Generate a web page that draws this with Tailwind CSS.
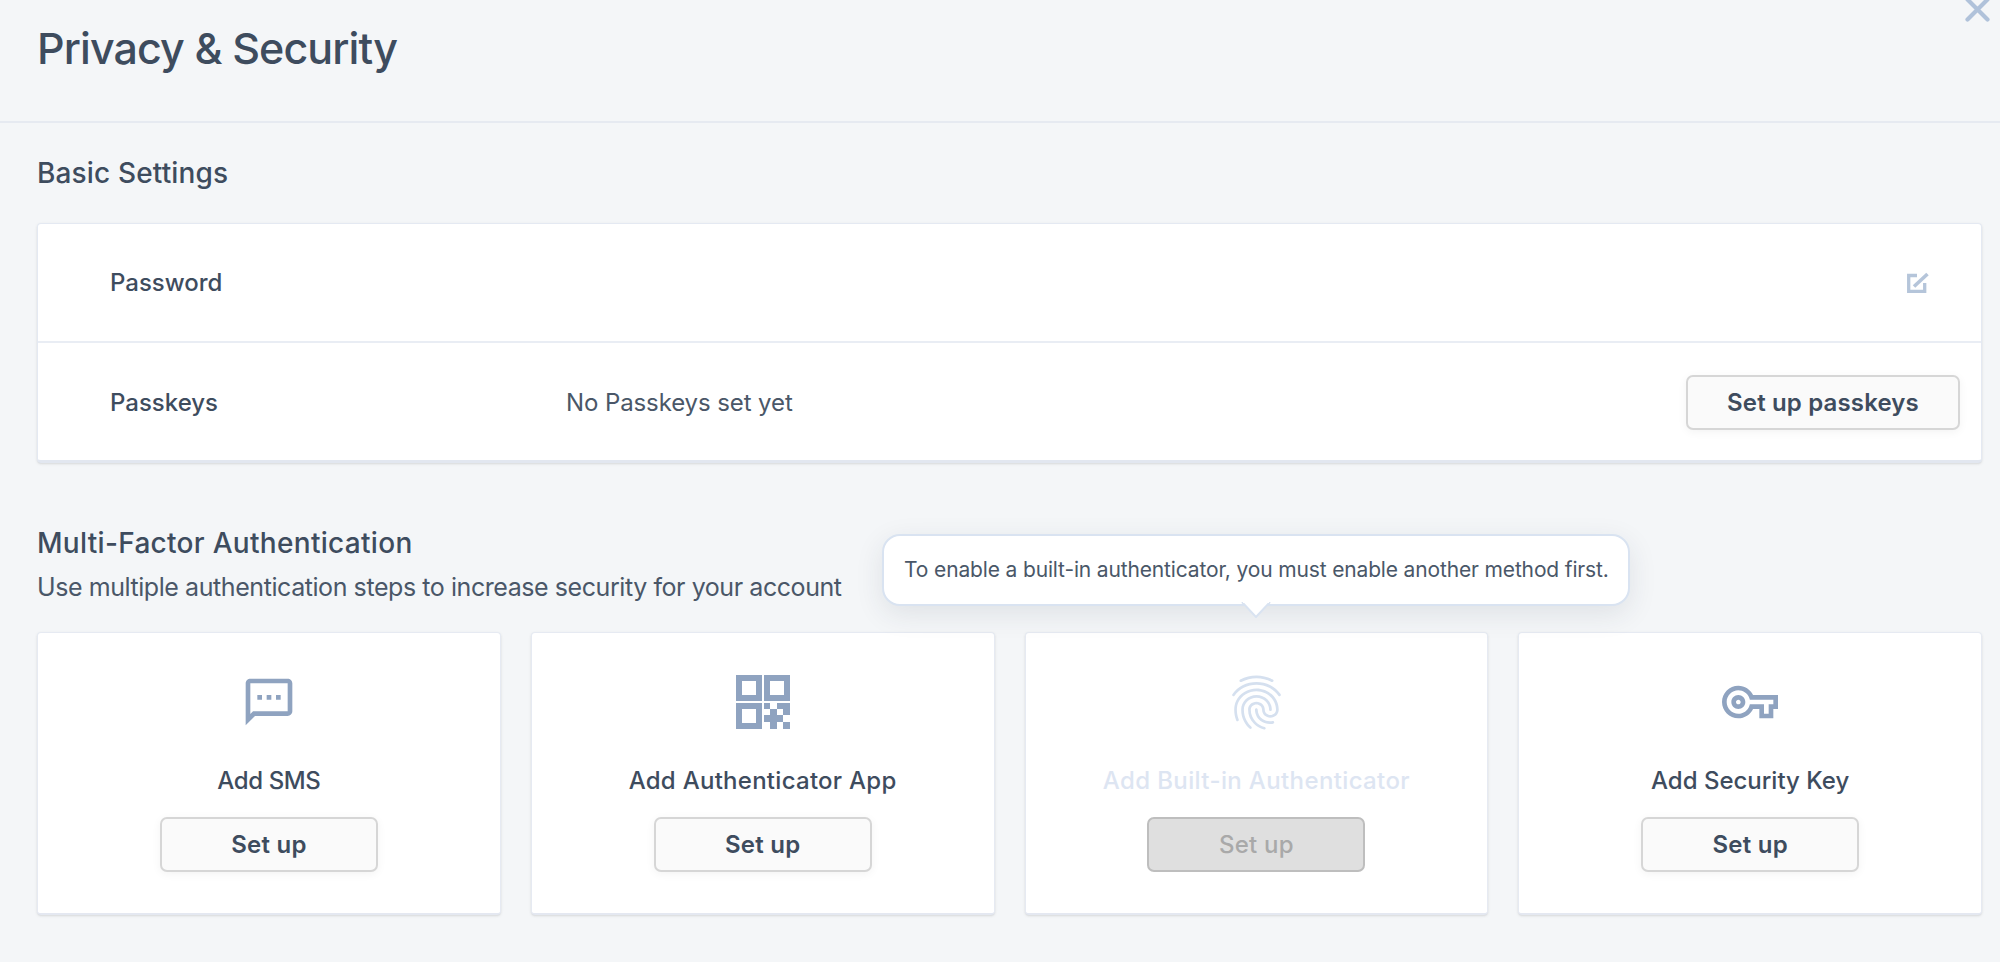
<!DOCTYPE html>
<html>
<head>
  <title>Privacy &amp; Security</title>
  <script src="https://cdn.jsdelivr.net/npm/@tailwindcss/browser@4"></script>
</head>
<body class="bg-[#f4f6f8] font-['Inter',sans-serif] text-[#3e4c5e] h-[962px] overflow-hidden relative">
  <!-- Close -->
  <svg class="absolute left-[1965px] top-[-3px] w-[25px] h-[25px]" viewBox="0 0 25 25" fill="none" stroke="#b0c2da" stroke-width="4.2" stroke-linecap="round"><path d="M2.5 2.5L22.5 22.5M22.5 2.5L2.5 22.5"/></svg>

  <!-- Header -->
  <div class="h-[123px] border-b-2 border-[#e6eaf1] pl-[37px] pt-[21px]">
    <h1 class="text-[43px] leading-[54px] font-medium tracking-[-0.9px]">Privacy &amp; Security</h1>
  </div>

  <div class="pl-[37px] pr-[18px]">
    <!-- Basic Settings -->
    <h2 class="mt-[32px] h-[36px] text-[28px] leading-[36px] font-medium tracking-[0.15px]">Basic Settings</h2>
    <div class="mt-[32px] bg-white rounded-[4px] border border-[#e4e9f2] border-b-[3px] border-b-[#e2e7f0] h-[240px] shadow-sm">
      <div class="h-[119px] border-b-2 border-[#e9edf4] flex items-center pl-[72px] pr-[52px] justify-between">
        <span class="text-[24px] font-medium">Password</span>
        <svg class="w-[22px] h-[21px]" viewBox="0 0 22 21" fill="none" stroke="#b5c5da"><path stroke-width="3.3" d="M10 3.5H1.7V19.3H17.7V11"/><path stroke-width="3.6" d="M7 14.5L20.5 2"/></svg>
      </div>
      <div class="h-[119px] flex items-center pl-[72px] pr-[21px]">
        <span class="w-[456px] text-[24px] font-medium">Passkeys</span>
        <span class="text-[24px] tracking-[-0.1px] text-[#4a5768]">No Passkeys set yet</span>
        <button class="ml-auto w-[274px] h-[55px] bg-[#fafafa] border-2 border-[#d6d6d6] rounded-[7px] text-[24px] font-semibold tracking-[0.15px] shadow-[0_2px_10px_rgba(0,0,0,0.05)]">Set up passkeys</button>
      </div>
    </div>

    <!-- Multi-Factor Authentication -->
    <h2 class="mt-[62px] h-[36px] text-[28px] leading-[36px] font-medium tracking-[0.3px]">Multi-Factor Authentication</h2>
    <p class="mt-[8px] h-[36px] text-[25px] leading-[36px] tracking-[-0.43px] text-[#4a5768]">Use multiple authentication steps to increase security for your account</p>

    <div class="mt-[27px] grid grid-cols-4 gap-[30px] h-[283px]">
      <!-- SMS -->
      <div class="bg-white rounded-[4px] border border-[#e6eaf2] border-b-2 border-b-[#e4e8f1] shadow-sm flex flex-col items-center pt-[37px]">
        <div class="h-[64px] flex items-center justify-center">
          <svg class="w-[56px] h-[56px]" viewBox="0 0 24 24" fill="#8fa3c0"><path d="M20 2H4c-1.1 0-1.99.9-1.99 2L2 22l4-4h14c1.1 0 2-.9 2-2V4c0-1.1-.9-2-2-2zm0 14H5.17L4 17.17V4h16v12zM7 9h2v2H7zm4 0h2v2h-2zm4 0h2v2h-2z"/></svg>
        </div>
        <div class="mt-[31px] h-[32px] text-[24px] leading-[32px] font-medium tracking-[-0.4px]">Add SMS</div>
        <button class="mt-[20px] w-[218px] h-[55px] bg-[#fafafa] border-2 border-[#d6d6d6] rounded-[7px] text-[24px] font-semibold tracking-[0.25px] shadow-[0_2px_10px_rgba(0,0,0,0.05)]">Set up</button>
      </div>

      <!-- Authenticator App -->
      <div class="bg-white rounded-[4px] border border-[#e6eaf2] border-b-2 border-b-[#e4e8f1] shadow-sm flex flex-col items-center pt-[37px]">
        <div class="h-[64px] flex items-center justify-center">
          <svg class="w-[54px] h-[54px]" viewBox="0 0 54 54" fill="#8fa3c0">
            <path fill-rule="evenodd" d="M0 0H26V26H0ZM6 6V20H20V6ZM28 0H54V26H28ZM34 6V20H48V6ZM0 28H26V54H0ZM6 34V48H20V34Z"/>
            <path d="M28 28h6v6h-6zM41 28h13v6H41zM34 34h7v6h-7zM47 34h7v6h-7zM28 40h19v7H28zM34 47h7v7h-7zM47 47h7v7h-7z"/>
          </svg>
        </div>
        <div class="mt-[31px] h-[32px] text-[24px] leading-[32px] font-medium tracking-[0.27px]">Add Authenticator App</div>
        <button class="mt-[20px] w-[218px] h-[55px] bg-[#fafafa] border-2 border-[#d6d6d6] rounded-[7px] text-[24px] font-semibold tracking-[0.25px] shadow-[0_2px_10px_rgba(0,0,0,0.05)]">Set up</button>
      </div>

      <!-- Built-in Authenticator (disabled, tooltip open) -->
      <div class="relative bg-white rounded-[4px] border border-[#e6eaf2] border-b-2 border-b-[#e4e8f1] shadow-sm flex flex-col items-center pt-[37px]">
        <div class="absolute left-1/2 -translate-x-1/2 bottom-[calc(100%+27px)] w-[748px] h-[72px] bg-white border-2 border-[#d9e3f1] rounded-[18px] flex items-center justify-center text-[21px] tracking-[-0.15px] text-[#4a5768] whitespace-nowrap shadow-[0_8px_28px_rgba(40,50,70,0.10)]">
          To enable a built-in authenticator, you must enable another method first.
          <svg class="absolute left-1/2 -translate-x-1/2 top-full -mt-[2px] w-[30px] h-[16px]" viewBox="0 0 30 16"><path d="M1 0L15 15L29 0" fill="#fff" stroke="#d9e3f1" stroke-width="2"/><path d="M2 0H28V1H2Z" fill="#fff"/></svg>
        </div>
        <div class="h-[64px] flex items-center justify-center">
          <svg class="w-[65px] h-[65px]" viewBox="0 0 24 24" fill="#d5e0ef"><path d="M17.81 4.47c-.08 0-.16-.02-.23-.06C15.66 3.42 14 3 12.01 3c-1.98 0-3.86.47-5.57 1.41-.24.13-.54.04-.68-.2-.13-.24-.04-.55.2-.68C7.82 2.52 9.86 2 12.01 2c2.13 0 3.99.47 6.03 1.52.25.13.34.43.21.67-.09.18-.26.28-.44.28zM3.5 9.72c-.1 0-.2-.03-.29-.09-.23-.16-.28-.47-.12-.7.99-1.4 2.25-2.5 3.75-3.27C9.98 4.04 14 4.03 17.15 5.65c1.5.77 2.76 1.86 3.75 3.25.16.22.11.54-.12.7-.23.16-.54.11-.7-.12-.9-1.26-2.04-2.25-3.39-2.94-2.87-1.47-6.54-1.47-9.4.01-1.36.7-2.5 1.7-3.4 2.96-.08.14-.23.21-.39.21zm6.25 12.07c-.13 0-.26-.05-.35-.15-.87-.87-1.34-1.43-2.01-2.64-.69-1.23-1.05-2.73-1.05-4.34 0-2.97 2.54-5.39 5.66-5.39s5.66 2.42 5.66 5.39c0 .28-.22.5-.5.5s-.5-.22-.5-.5c0-2.42-2.09-4.39-4.66-4.39-2.57 0-4.66 1.97-4.66 4.39 0 1.44.32 2.77.93 3.85.64 1.15 1.08 1.64 1.85 2.42.19.2.19.51 0 .71-.11.1-.24.15-.37.15zm7.17-1.85c-1.19 0-2.24-.3-3.1-.89-1.49-1.01-2.38-2.65-2.38-4.39 0-.28.22-.5.5-.5s.5.22.5.5c0 1.41.72 2.74 1.94 3.56.71.48 1.54.71 2.54.71.24 0 .64-.03 1.04-.1.27-.05.53.13.58.41.05.27-.13.53-.41.58-.57.11-1.07.12-1.21.12zM14.91 22c-.04 0-.09-.01-.13-.02-1.59-.44-2.63-1.03-3.72-2.1-1.4-1.39-2.17-3.24-2.17-5.22 0-1.62 1.38-2.94 3.08-2.94 1.7 0 3.08 1.32 3.08 2.94 0 1.07.93 1.94 2.08 1.94s2.08-.87 2.08-1.94c0-3.77-3.25-6.83-7.25-6.83-2.84 0-5.44 1.58-6.61 4.03-.39.81-.59 1.76-.59 2.8 0 .78.07 2.01.67 3.61.1.26-.03.55-.29.64-.26.1-.55-.04-.64-.29-.49-1.31-.73-2.61-.73-3.96 0-1.2.23-2.29.68-3.24 1.33-2.79 4.28-4.6 7.51-4.6 4.55 0 8.25 3.51 8.25 7.83 0 1.62-1.38 2.94-3.08 2.94s-3.08-1.32-3.08-2.94c0-1.07-.93-1.94-2.08-1.94s-2.08.87-2.08 1.94c0 1.71.66 3.31 1.87 4.51.95.94 1.86 1.46 3.27 1.85.27.07.42.35.35.61-.05.23-.26.38-.47.38z"/></svg>
        </div>
        <div class="mt-[31px] h-[32px] text-[24px] leading-[32px] font-medium tracking-[0.37px] text-[#dde5f2]">Add Built-in Authenticator</div>
        <button class="mt-[20px] w-[218px] h-[55px] bg-[#dfdfdf] border-2 border-[#bebebe] rounded-[7px] text-[24px] font-medium tracking-[0.25px] text-[#a9a9a9]">Set up</button>
      </div>

      <!-- Security Key -->
      <div class="bg-white rounded-[4px] border border-[#e6eaf2] border-b-2 border-b-[#e4e8f1] shadow-sm flex flex-col items-center pt-[37px]">
        <div class="h-[64px] flex items-center justify-center">
          <svg class="w-[56px] h-[56px]" viewBox="0 0 24 24" fill="#8fa3c0"><path d="M22 19h-6v-4h-2.68c-1.14 2.42-3.6 4-6.32 4-3.86 0-7-3.14-7-7s3.14-7 7-7c2.72 0 5.17 1.58 6.32 4H24v6h-2v4zm-4-2h2v-4h2v-2H11.94l-.23-.67C11.01 8.34 9.11 7 7 7c-2.76 0-5 2.24-5 5s2.24 5 5 5c2.11 0 4.01-1.34 4.71-3.33l.23-.67H18v4zM7 15c-1.65 0-3-1.35-3-3s1.35-3 3-3 3 1.35 3 3-1.35 3-3 3zm0-4c-.55 0-1 .45-1 1s.45 1 1 1 1-.45 1-1-.45-1-1-1z"/></svg>
        </div>
        <div class="mt-[31px] h-[32px] text-[24px] leading-[32px] font-medium tracking-[0px]">Add Security Key</div>
        <button class="mt-[20px] w-[218px] h-[55px] bg-[#fafafa] border-2 border-[#d6d6d6] rounded-[7px] text-[24px] font-semibold tracking-[0.25px] shadow-[0_2px_10px_rgba(0,0,0,0.05)]">Set up</button>
      </div>
    </div>
  </div>
</body>
</html>
